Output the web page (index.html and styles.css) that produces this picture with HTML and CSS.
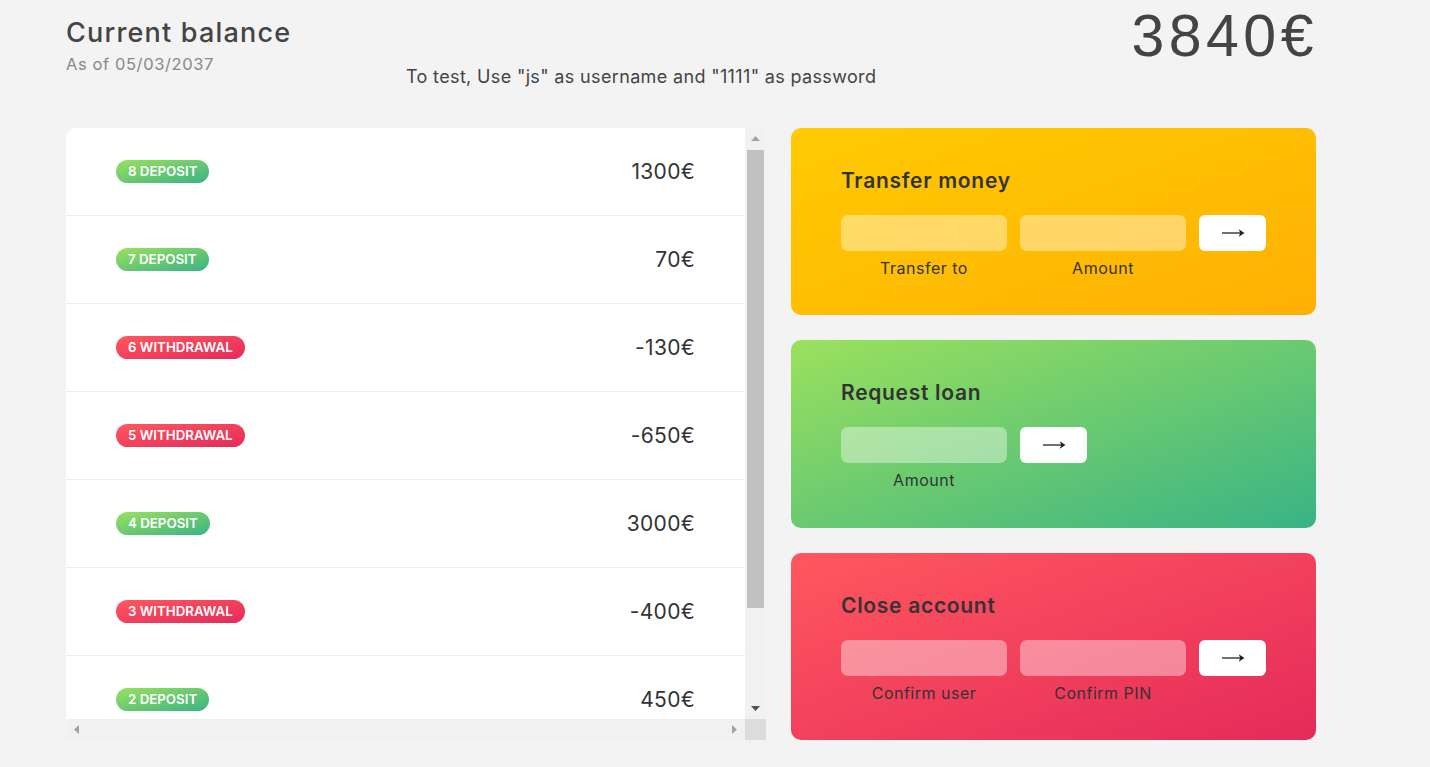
FILE: index.html
```html
<!DOCTYPE html>
<html lang="en">
<head>
<meta charset="utf-8">
<title>Bankist</title>
<link rel="stylesheet" href="styles.css">
</head>
<body>
<main class="app">
  <header class="balance">
    <div class="balance__info">
      <p class="balance__label">Current balance</p>
      <p class="balance__date">As of <span>05/03/2037</span></p>
    </div>
    <p class="hint">To test, Use "js" as username and "1111" as password</p>
    <p class="balance__value">3840€</p>
  </header>

  <div class="content">
    <section class="movements">
      <div class="movements__list">
        <div class="movements__row">
          <span class="movements__type movements__type--deposit">8 deposit</span>
          <span class="movements__value">1300€</span>
        </div>
        <div class="movements__row">
          <span class="movements__type movements__type--deposit">7 deposit</span>
          <span class="movements__value">70€</span>
        </div>
        <div class="movements__row">
          <span class="movements__type movements__type--withdrawal">6 withdrawal</span>
          <span class="movements__value">-130€</span>
        </div>
        <div class="movements__row">
          <span class="movements__type movements__type--withdrawal">5 withdrawal</span>
          <span class="movements__value">-650€</span>
        </div>
        <div class="movements__row">
          <span class="movements__type movements__type--deposit">4 deposit</span>
          <span class="movements__value">3000€</span>
        </div>
        <div class="movements__row">
          <span class="movements__type movements__type--withdrawal">3 withdrawal</span>
          <span class="movements__value">-400€</span>
        </div>
        <div class="movements__row">
          <span class="movements__type movements__type--deposit">2 deposit</span>
          <span class="movements__value">450€</span>
        </div>
      </div>
      <div class="vscroll">
        <span class="sb-btn"><svg width="9" height="5" viewBox="0 0 9 5"><polygon points="0,5 9,5 4.5,0" fill="#a3a3a3"/></svg></span>
        <span class="vscroll__thumb"></span>
        <span class="sb-btn sb-btn--end"><svg width="9" height="5" viewBox="0 0 9 5"><polygon points="0,0 9,0 4.5,5" fill="#505050"/></svg></span>
      </div>
      <div class="hscroll">
        <span class="sb-btn"><svg width="5" height="9" viewBox="0 0 5 9"><polygon points="5,0 5,9 0,4.5" fill="#a3a3a3"/></svg></span>
        <span class="sb-btn sb-btn--end"><svg width="5" height="9" viewBox="0 0 5 9"><polygon points="0,0 0,9 5,4.5" fill="#a3a3a3"/></svg></span>
      </div>
      <div class="sb-corner"></div>
    </section>

    <div class="ops">
      <section class="operation operation--transfer">
        <h2 class="operation__title">Transfer money</h2>
        <form class="form form--3">
          <input type="text" class="form__input" aria-label="Transfer to">
          <input type="number" class="form__input" aria-label="Amount">
          <button type="button" class="form__btn"><svg width="23" height="10" viewBox="0 0 23 10"><path d="M0 5H21" stroke="#222" stroke-width="1.3" fill="none"/><path d="M16.8 1.3L22.5 5L16.8 8.7L18.2 5Z" fill="#222"/></svg></button>
          <label class="form__label">Transfer to</label>
          <label class="form__label">Amount</label>
        </form>
      </section>

      <section class="operation operation--loan">
        <h2 class="operation__title">Request loan</h2>
        <form class="form form--2">
          <input type="number" class="form__input" aria-label="Amount">
          <button type="button" class="form__btn"><svg width="23" height="10" viewBox="0 0 23 10"><path d="M0 5H21" stroke="#222" stroke-width="1.3" fill="none"/><path d="M16.8 1.3L22.5 5L16.8 8.7L18.2 5Z" fill="#222"/></svg></button>
          <label class="form__label">Amount</label>
        </form>
      </section>

      <section class="operation operation--close">
        <h2 class="operation__title">Close account</h2>
        <form class="form form--3">
          <input type="text" class="form__input" aria-label="Confirm user">
          <input type="password" class="form__input" aria-label="Confirm PIN">
          <button type="button" class="form__btn"><svg width="23" height="10" viewBox="0 0 23 10"><path d="M0 5H21" stroke="#222" stroke-width="1.3" fill="none"/><path d="M16.8 1.3L22.5 5L16.8 8.7L18.2 5Z" fill="#222"/></svg></button>
          <label class="form__label">Confirm user</label>
          <label class="form__label">Confirm PIN</label>
        </form>
      </section>
    </div>
  </div>
</main>
</body>
</html>
```
FILE: styles.css
```css
* {
  box-sizing: border-box;
}

body {
  margin: 0;
  background: #f3f3f3;
  color: #444;
  font-family: "Inter", "Open Sans", sans-serif;
}

p, h2 {
  margin: 0;
}

.app {
  width: 1250px;
  margin-left: 66px;
  padding-top: 16px;
}

/* Header */
.balance {
  display: grid;
  grid-template-columns: 340px 1fr auto;
  align-items: start;
  height: 112px;
}

.balance__label {
  font-size: 27px;
  line-height: 34px;
  font-weight: 500;
  letter-spacing: 1.2px;
  color: #444;
}

.balance__date {
  margin-top: 4px;
  font-size: 16.5px;
  line-height: 20px;
  letter-spacing: 0.6px;
  color: #888;
}

.hint {
  margin-top: 50px;
  font-size: 18px;
  line-height: 22px;
  letter-spacing: 0.35px;
  color: #444;
}

.balance__value {
  margin-top: -15px;
  margin-right: -2px;
  font-family: "Liberation Sans", Arial, sans-serif;
  font-size: 59px;
  line-height: 70px;
  letter-spacing: 4.5px;
  color: #444;
}

/* Main content */
.content {
  display: grid;
  grid-template-columns: 700px 525px;
  column-gap: 25px;
  height: 612px;
}

/* Movements with its scrollbars */
.movements {
  display: grid;
  grid-template-columns: 1fr 21px;
  grid-template-rows: 1fr 21px;
  border-radius: 10px 0 0 0;
  overflow: hidden;
}

.movements__list {
  background: #fff;
  overflow: hidden;
}

.movements__row {
  display: flex;
  align-items: center;
  height: 88px;
  padding: 0 50px;
  border-bottom: 1px solid #eee;
}

.movements__type {
  font-size: 13.3px;
  line-height: 21px;
  font-weight: 600;
  text-transform: uppercase;
  color: #fff;
  padding: 1px 12px;
  border-radius: 100px;
}

.movements__type--deposit {
  background-image: linear-gradient(to top left, #39b385, #9be15d);
}

.movements__type--withdrawal {
  background-image: linear-gradient(to top left, #e52a5a, #ff585f);
}

.movements__value {
  margin-left: auto;
  font-size: 21px;
  letter-spacing: 0.3px;
  color: #333;
}

.vscroll {
  display: flex;
  flex-direction: column;
  background: #f1f1f1;
}

.vscroll__thumb {
  display: block;
  height: 458px;
  margin: 1px 2px 0;
  background: #c1c1c1;
}

.hscroll {
  display: flex;
  background: #f1f1f1;
}

.sb-btn {
  display: flex;
  align-items: center;
  justify-content: center;
  width: 21px;
  height: 21px;
  flex: none;
}

.vscroll .sb-btn--end {
  margin-top: auto;
}

.hscroll .sb-btn--end {
  margin-left: auto;
}

.sb-corner {
  background: #dcdcdc;
}

/* Operations */
.ops {
  display: flex;
  flex-direction: column;
  gap: 25px;
}

.operation {
  flex: 1;
  border-radius: 10px;
  padding: 41px 50px 0;
  color: #333;
}

.operation--transfer {
  background-image: linear-gradient(to top left, #ffb003, #ffcb03);
}

.operation--loan {
  background-image: linear-gradient(to top left, #39b385, #9be15d);
}

.operation--close {
  background-image: linear-gradient(to top left, #e52a5a, #ff585f);
}

.operation__title {
  font-size: 21px;
  line-height: 24px;
  font-weight: 600;
  letter-spacing: 0.7px;
  margin-bottom: 22px;
}

.form {
  display: grid;
  column-gap: 13px;
  row-gap: 7px;
}

.form--3 {
  grid-template-columns: 166px 166px 67px;
}

.form--2 {
  grid-template-columns: 166px 67px;
}

.form__input {
  height: 36px;
  border: none;
  border-radius: 7px;
  background: rgba(255, 255, 255, 0.4);
  font-family: inherit;
  font-size: 15px;
  padding: 0 12px;
  outline: none;
}

.form__btn {
  height: 36px;
  border: none;
  border-radius: 6px;
  background: #fff;
  display: flex;
  align-items: center;
  justify-content: center;
  padding: 0 0 0 1px;
  cursor: pointer;
}

.form__label {
  text-align: center;
  font-size: 16px;
  line-height: 20px;
  letter-spacing: 0.5px;
  color: #333;
}
```
